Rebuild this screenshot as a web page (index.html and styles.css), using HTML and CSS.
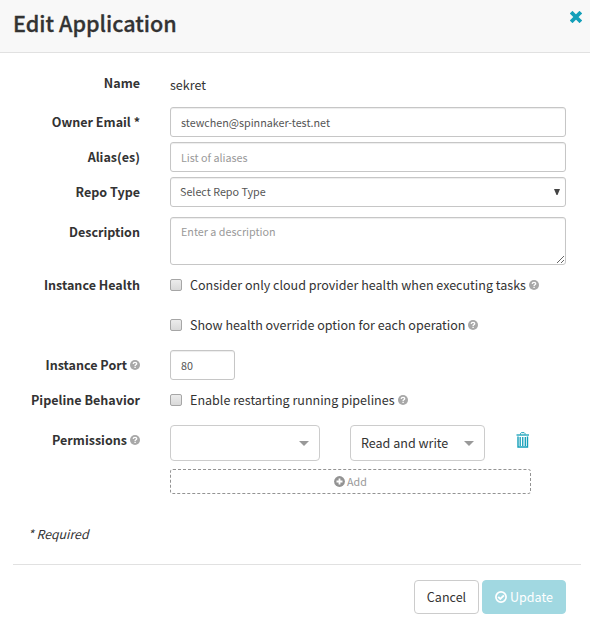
FILE: index.html
```html
<!DOCTYPE html>
<html lang="en">
<head>
<meta charset="utf-8">
<title>Edit Application</title>
<link rel="stylesheet" href="styles.css">
</head>
<body>
<svg class="sprite" aria-hidden="true">
  <symbol id="help" viewBox="0 0 10 10">
    <circle cx="5" cy="5" r="5" fill="#a8a8a8"/>
    <path d="M3.2 3.9C3.3 2.9 4.1 2.4 5 2.4c1 0 1.7.5 1.7 1.4C6.7 4.8 5.1 4.8 5.1 6" fill="none" stroke="#fff" stroke-width="1.4"/>
    <path d="M4.4 6.8h1.4v1.3H4.4z" fill="#fff"/>
  </symbol>
</svg>
<header class="modal-header">
  <h1>Edit Application</h1>
  <button class="close" aria-label="Close"><svg width="12" height="12" viewBox="0 0 12 12"><path d="M2.5 2.5L9.5 9.5M9.5 2.5L2.5 9.5" stroke="#139fb9" stroke-width="3.8" stroke-linecap="square"/></svg></button>
</header>
<main class="modal-body">
  <div class="row name-row"><div class="label">Name</div><div class="field static">sekret</div></div>
  <div class="row"><label class="label">Owner Email *</label><input class="control" value="stewchen@spinnaker-test.net"></div>
  <div class="row"><label class="label">Alias(es)</label><input class="control" placeholder="List of aliases"></div>
  <div class="row repo-row"><label class="label">Repo Type</label><div class="select-wrap"><select class="control"><option>Select Repo Type</option></select><svg width="6" height="6" viewBox="0 0 6 6"><path d="M0 0h6L3.5 6h-1z" fill="#444"/></svg></div></div>
  <div class="row description-row"><label class="label">Description</label><textarea class="control" placeholder="Enter a description"></textarea></div>
  <div class="row check-row"><div class="label">Instance Health</div><label class="check"><input type="checkbox"><span>Consider only cloud provider health when executing tasks</span><svg class="help"><use href="#help"/></svg></label></div>
  <div class="row check-row override-row"><div class="label"></div><label class="check"><input type="checkbox"><span>Show health override option for each operation</span><svg class="help"><use href="#help"/></svg></label></div>
  <div class="row port-row"><label class="label">Instance Port<svg class="help"><use href="#help"/></svg></label><input class="control port" value="80"></div>
  <div class="row check-row pipeline-row"><div class="label">Pipeline Behavior</div><label class="check"><input type="checkbox"><span>Enable restarting running pipelines</span><svg class="help"><use href="#help"/></svg></label></div>
  <div class="row permissions-row">
    <div class="label">Permissions<svg class="help"><use href="#help"/></svg></div>
    <div class="permissions">
      <div class="permission">
        <div class="picker group"><span></span><i class="caret"></i></div>
        <div class="picker access"><span>Read and write</span><i class="caret"></i></div>
        <svg class="trash" width="14" height="16" viewBox="0 0 14 16" fill="none" stroke="#139fb9"><path d="M4.5 2.5V1.5l.8-.8h2.9l.8.8v1"/><path d="M.5 3h12.5" stroke-width="1.3"/><path d="M2 4.5V15h9.5V4.5" stroke-width="1.4"/><path d="M4.2 5v9M6.75 5v9M9.3 5v9" stroke-width="1.3"/></svg>
      </div>
      <button class="add"><svg width="11" height="11" viewBox="0 0 11 11"><circle cx="5.5" cy="5.5" r="5.4" fill="#939393"/><path d="M5.5 2.5v6M2.5 5.5h6" stroke="#fff" stroke-width="1.8"/></svg><span>Add</span></button>
    </div>
  </div>
  <p class="required">* Required</p>
</main>
<footer class="modal-footer">
  <button class="btn cancel">Cancel</button>
  <button class="btn update"><svg width="12" height="12" viewBox="0 0 12 12" fill="none" stroke="#fff"><circle cx="6" cy="6" r="5.1" stroke-width="1.7"/><path d="M3.2 5.8L5.3 8L8.9 4.4" stroke-width="1.9"/></svg><span>Update</span></button>
</footer>
</body>
</html>
```

FILE: styles.css
```css
* { box-sizing: border-box; }
body, button, input, select, textarea { font-family: "Noto Sans CJK SC", "Noto Sans", sans-serif; }
body { margin: 0; background: #fff; color: #333; font-size: 12.54px; line-height: 20px; white-space: nowrap; }
.sprite { position: absolute; width: 0; height: 0; }
.modal-header { display: flex; justify-content: space-between; height: 53px; padding: 11px 8px 0 13px; background: #f8f8f8; border-bottom: 1px solid #e1e1e1; }
h1 { margin: -1px 0 0; font-size: 21.6px; line-height: 26px; font-weight: 500; -webkit-text-stroke: .3px #333; }
.close { width: 12px; height: 12px; padding: 0; border: 0; background: none; display: flex; }
.modal-body { padding-top: 20px; }
.row { display: grid; grid-template-columns: 140px 396px; column-gap: 30px; align-items: start; margin-bottom: 5px; }
.label { text-align: right; font-weight: 700; padding-top: 5px; display: flex; justify-content: flex-end; align-items: center; }
.name-row { height: 29px; }
.name-row .label { padding-top: 0; }
.static { padding-top: 2px; }
.control { display: block; width: 100%; height: 30px; margin: 0; padding: 4px 10px; border: 1px solid #c6c6c6; border-radius: 3px; background: #fff; box-shadow: inset 0 1px 1px rgba(0,0,0,.075); color: #555; font-size: 10.76px; line-height: 18px; outline: 0; }
.control::placeholder { color: #999; opacity: 1; }
.select-wrap { display: grid; align-items: center; }
.select-wrap > * { grid-area: 1 / 1; }
.select-wrap svg { justify-self: end; margin-right: 6px; }
select.control { appearance: none; padding-left: 9px; }
.repo-row { margin-bottom: 10px; }
textarea.control { height: 48px; resize: vertical; padding-top: 5px; }
.description-row { margin-bottom: 10px; }
.check-row { height: 20px; margin-bottom: 20px; }
.check-row .label { padding-top: 0; }
.check { display: flex; align-items: center; }
.check input { appearance: none; flex: none; width: 12px; height: 12px; margin: 0 8px 0 0; border: 1px solid #a6a6a6; border-radius: 2px; background: linear-gradient(#ececec, #d9d9d9); }
.help { width: 10px; height: 10px; margin-left: 3px; flex: none; }
.override-row { margin-bottom: 15px; }
.port-row { margin-bottom: 10px; }
.port { width: 65px; }
.pipeline-row { margin-bottom: 15px; }
.permission { display: flex; height: 36px; }
.picker { display: flex; align-items: center; justify-content: space-between; height: 36px; padding: 0 10px; border: 1px solid #ccc; border-radius: 4px; }
.group { width: 150px; margin-right: 30px; }
.access { width: 135px; }
.caret { border: 5px solid transparent; border-top-color: #999; border-bottom: 0; }
.trash { margin: 7px 0 0 31px; }
.add { display: flex; align-items: center; justify-content: center; gap: 2px; width: 361px; height: 25px; margin-top: 8px; padding: 0; border: 1px dashed #939393; border-radius: 3px; background: #fff; color: #999; font-size: 10.72px; line-height: 18px; }
.required { margin: 30px 0 0 28px; font-style: italic; font-size: 12.3px; height: 20px; }
.modal-footer { display: flex; justify-content: flex-end; gap: 3px; margin: 20px 9px 0 13px; padding: 15px 15px 0 0; border-top: 1px solid #e1e1e1; }
.btn { display: flex; align-items: center; justify-content: center; gap: 3px; height: 34px; padding: 0; border: 1px solid #ccc; border-radius: 4px; background: #fff; color: #333; font-size: 12.54px; line-height: 20px; }
.cancel { width: 65px; }
.update { width: 84px; border-color: #a1d8e1; background: #a1d8e1; color: #fff; }
```
